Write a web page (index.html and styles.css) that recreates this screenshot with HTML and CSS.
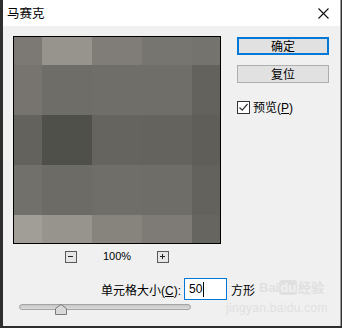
FILE: index.html
```html
<!DOCTYPE html>
<html lang="zh-CN">
<head>
  <meta charset="UTF-8">
  <title>马赛克</title>
  <link rel="stylesheet" href="styles.css">
</head>
<body>
  <div class="window">
    <div class="titlebar">
      <span class="title">马赛克</span>
      <svg class="close" width="11" height="11" viewBox="0 0 11 11">
        <path d="M0.5 0.5 L10.5 10.5 M10.5 0.5 L0.5 10.5" stroke="#111" stroke-width="1.1" fill="none"/>
      </svg>
    </div>

    <div class="main">
      <div class="left">
        <!-- mosaic preview -->
        <div class="preview">
          <div class="cell" style="background:#7c7974"></div>
          <div class="cell" style="background:#97938d"></div>
          <div class="cell" style="background:#807d78"></div>
          <div class="cell" style="background:#77756f"></div>
          <div class="cell" style="background:#74736d"></div>

          <div class="cell" style="background:#77746f"></div>
          <div class="cell" style="background:#6e6d68"></div>
          <div class="cell" style="background:#6f6e69"></div>
          <div class="cell" style="background:#6f6e69"></div>
          <div class="cell" style="background:#63625d"></div>

          <div class="cell" style="background:#63625d"></div>
          <div class="cell" style="background:#50504b"></div>
          <div class="cell" style="background:#65645f"></div>
          <div class="cell" style="background:#64635e"></div>
          <div class="cell" style="background:#5f5e59"></div>

          <div class="cell" style="background:#72706b"></div>
          <div class="cell" style="background:#6c6b66"></div>
          <div class="cell" style="background:#6f6e69"></div>
          <div class="cell" style="background:#6e6d68"></div>
          <div class="cell" style="background:#63625d"></div>

          <div class="cell" style="background:#a19e98"></div>
          <div class="cell" style="background:#97948e"></div>
          <div class="cell" style="background:#87847e"></div>
          <div class="cell" style="background:#7e7b76"></div>
          <div class="cell" style="background:#66655f"></div>
        </div>

        <div class="zoom-row">
          <span class="zoom-btn">
            <svg width="11" height="11" viewBox="0 0 11 11"><path d="M3 5.5 H8" stroke="#222" stroke-width="1"/></svg>
          </span>
          <span class="zoom-value">100%</span>
          <span class="zoom-btn">
            <svg width="11" height="11" viewBox="0 0 11 11"><path d="M3 5.5 H8 M5.5 3 V8" stroke="#222" stroke-width="1"/></svg>
          </span>
        </div>
      </div>

      <div class="right">
        <button class="btn btn-default">确定</button>
        <button class="btn">复位</button>
        <label class="check">
          <span class="box">
            <svg width="11" height="11" viewBox="0 0 11 11"><path d="M1.5 5.5 L4.2 8.2 L9.5 2" stroke="#333" stroke-width="1.2" fill="none"/></svg>
          </span>
          <span>预览<span class="latin">(<u>P</u>)</span></span>
        </label>
      </div>
    </div>

    <div class="size-row">
      <span class="size-label">单元格大小<span class="latin">(<u>C</u>):</span></span>
      <span class="size-input">50<span class="caret"></span></span>
      <span class="size-unit">方形</span>
    </div>

    <div class="slider">
      <div class="track"></div>
      <svg class="thumb" width="12" height="11" viewBox="0 0 12 11">
        <path d="M0.5 10.5 V4.5 L6 0.5 L11.5 4.5 V10.5 Z" fill="#d9d9d9" stroke="#7a7a7a" stroke-width="1"/>
      </svg>
    </div>

    <!-- watermark over the dialog -->
    <span class="wm-logo">Bai<b>du</b>经验</span>
    <span class="wm-url">jingyan.baidu.com</span>
  </div>
</body>
</html>
```

FILE: styles.css
```css
body {
  margin: 0;
  background-color: #2e2e2e;
  font-family: "Noto Sans CJK SC", "Liberation Sans", sans-serif;
  font-size: 12px;
  color: #000;
}

.window {
  position: relative;
  margin-left: 3px;
  width: 337px;
  height: 326px;
  background-color: #f0f0f0;
  border-right: 1px solid #9c9c9c;
  overflow: hidden;
}

.latin {
  font-family: "Liberation Sans", sans-serif;
}

.titlebar {
  height: 26px;
  background-color: #fff;
  display: flex;
  align-items: center;
  justify-content: space-between;
  padding: 0 11px 0 4px;
}

.title {
  font-size: 12.5px;
  line-height: 14px;
  margin-top: -1px;
}

.close {
  margin-top: 1px;
}

.main {
  display: flex;
  padding: 10px 0 0 10px;
  gap: 16px;
}

/* Preview */
.preview {
  width: 206px;
  height: 206px;
  border: 1px solid #000;
  display: grid;
  grid-template-columns: 28px 50px 50px 50px 28px;
  grid-template-rows: 28px 50px 50px 50px 28px;
}

.zoom-row {
  display: flex;
  justify-content: center;
  align-items: center;
  gap: 26px;
  margin-top: 7px;
  height: 11px;
}

.zoom-btn {
  width: 10px;
  height: 10px;
  border: 1px solid #5a5a5a;
  background-color: #e6e6e6;
  display: flex;
}

.zoom-btn svg {
  margin: -1px 0 0 -1px;
}

.zoom-value {
  font-family: "Liberation Sans", sans-serif;
  font-size: 11px;
  line-height: 11px;
}

/* Buttons */
.right {
  display: flex;
  flex-direction: column;
  align-items: flex-start;
  padding-top: 1px;
}

.btn {
  width: 92px;
  height: 18px;
  padding: 0;
  background-color: #e1e1e1;
  border: 1px solid #adadad;
  font-family: "Noto Sans CJK SC", sans-serif;
  font-size: 12px;
  line-height: 14px;
  color: #000;
  margin-bottom: 10px;
}

.btn-default {
  border: 2px solid #0078d7;
}

.check {
  display: flex;
  align-items: center;
  gap: 3px;
  margin-top: 7px;
  line-height: 13px;
}

.box {
  width: 11px;
  height: 11px;
  border: 1px solid #333;
  background-color: #fff;
  display: flex;
}

/* Cell size */
.size-row {
  display: flex;
  align-items: center;
  margin-top: 16px;
  height: 22px;
}

.size-label {
  width: 178px;
  text-align: right;
}

.size-input {
  box-sizing: border-box;
  margin-left: 3px;
  width: 43px;
  height: 22px;
  border: 1px solid #0078d7;
  background-color: #fff;
  padding-left: 4px;
  display: flex;
  align-items: center;
  font-family: "Liberation Sans", sans-serif;
  font-size: 12px;
}

.caret {
  width: 1px;
  height: 15px;
  background-color: #000;
  margin-left: 1px;
}

.size-unit {
  margin-left: 4px;
}

/* Slider */
.slider {
  position: relative;
  margin: 4px 0 0 16px;
  width: 172px;
  height: 11px;
}

.track {
  margin-top: 3px;
  height: 4px;
  border: 1px solid #a4a4a4;
  border-radius: 3px;
  background: linear-gradient(#c6c6c6, #dcdcdc);
}

.thumb {
  position: absolute;
  left: 36px;
  top: 0;
}

/* Watermark */
.wm-logo {
  position: absolute;
  left: 256px;
  top: 279px;
  font-family: "Liberation Sans", sans-serif;
  font-size: 13px;
  font-weight: bold;
  line-height: 18px;
  color: #e0e0e0;
  white-space: nowrap;
}

.wm-logo b {
  background-color: #e0e0e0;
  color: #f0f0f0;
  border-radius: 3px;
  padding: 0 1px;
  margin-right: 1px;
}

.wm-url {
  position: absolute;
  left: 223px;
  top: 302px;
  font-family: "Liberation Sans", sans-serif;
  font-size: 12px;
  line-height: 13px;
  letter-spacing: 0.3px;
  color: #e0e0e0;
}
```
